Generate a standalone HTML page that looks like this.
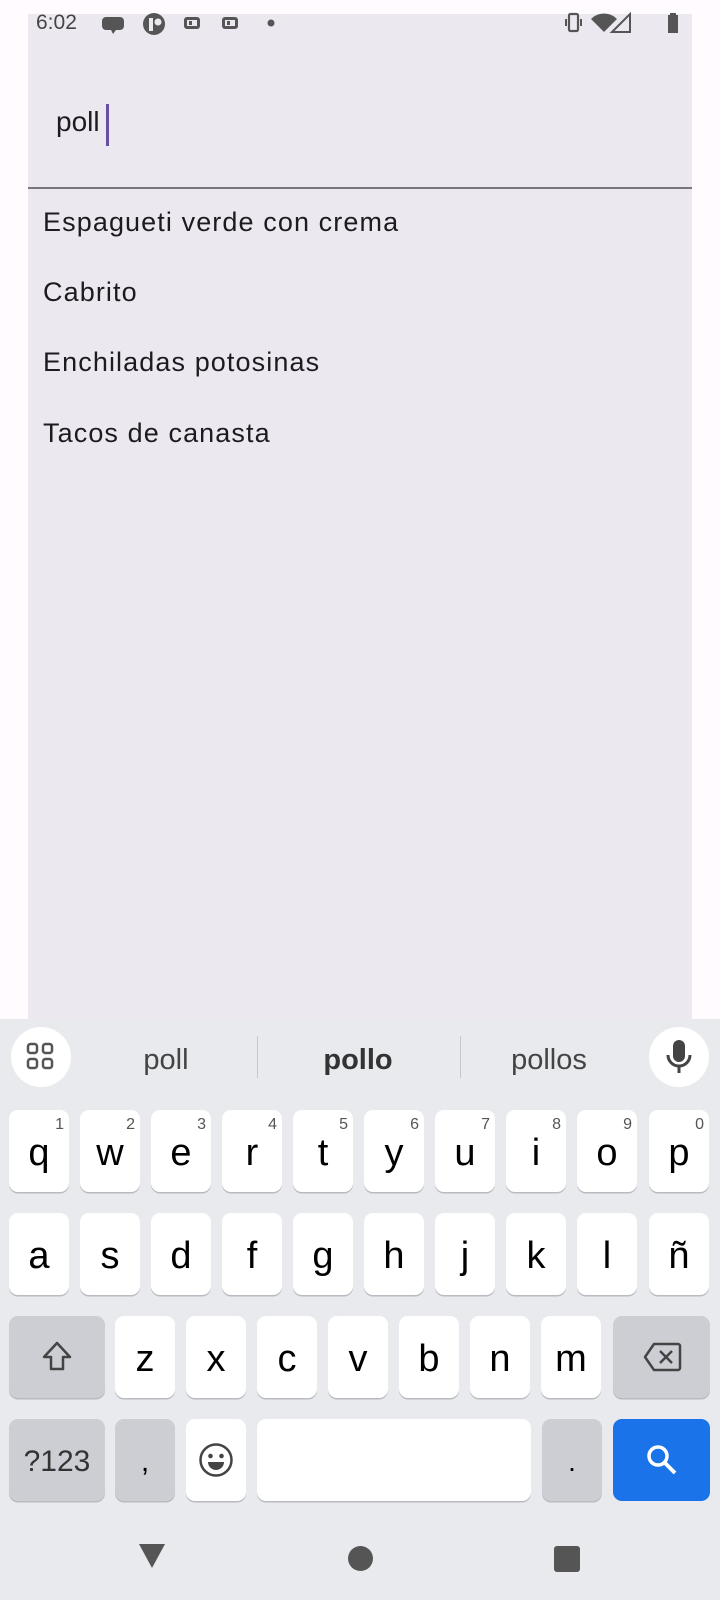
<!DOCTYPE html>
<html><head><meta charset="utf-8"><style>
*{margin:0;padding:0;box-sizing:border-box}
body{width:720px;height:1600px;background:#fffbfe;position:relative;overflow:hidden;font-family:"Liberation Sans",sans-serif}
.abs{position:absolute}
.panel{left:28px;top:14px;width:664px;height:1006px;background:#ece8f0}
.item{left:43px;font-size:27px;color:#1d1b20;letter-spacing:1.1px}
.kb{left:0;top:1019px;width:720px;height:581px;background:#e8eaed}
.key{position:absolute;width:60px;height:82px;background:#fff;border-radius:9px;box-shadow:0 1.5px 0 #b8bbc0;font-size:38px;color:#000;text-align:center;line-height:86px}
.key.g{background:#ccced4}
.key sup{position:absolute;right:5px;top:-28px;font-size:16px;color:#555}
.sug{top:1044px;font-size:29px;color:#444;width:140px;text-align:center}
</style></head><body>
<div class="abs panel"></div>
<div class="abs" style="left:36px;top:11px;font-size:21px;color:#444">6:02</div>
<svg class="abs" style="left:100px;top:12px" width="180" height="26">
<path d="M6 5h14a4 4 0 0 1 4 4v5a4 4 0 0 1-4 4h-4l-3 4-2-4h-5a4 4 0 0 1-4-4v-5a4 4 0 0 1 4-4z" fill="#555"/>
<circle cx="54" cy="12" r="11" fill="#555"/><rect x="49" y="6" width="4" height="13" fill="#ece8f0"/><circle cx="58" cy="10" r="3.5" fill="#ece8f0"/>
<rect x="84" y="5" width="16" height="12" rx="3" fill="#555"/><rect x="87" y="8" width="10" height="6" fill="#ece8f0"/><rect x="89" y="9" width="3" height="4" fill="#555"/>
<rect x="122" y="5" width="16" height="12" rx="3" fill="#555"/><rect x="125" y="8" width="10" height="6" fill="#ece8f0"/><rect x="127" y="9" width="3" height="4" fill="#555"/>
<circle cx="171" cy="11" r="3.5" fill="#555"/></svg>
<svg class="abs" style="left:565px;top:11px" width="120" height="24">
<rect x="4" y="3" width="9" height="17" rx="1.5" fill="none" stroke="#555" stroke-width="2.2"/><path d="M1 8v7M16 8v7" stroke="#555" stroke-width="2"/>
<path d="M39 21L26 8a18 18 0 0 1 26 0z" fill="#555"/>
<path d="M65 3v18h-18z" fill="none" stroke="#555" stroke-width="2"/>
<rect x="103" y="4" width="10" height="18" fill="#555"/><rect x="105" y="2" width="6" height="3" fill="#555"/></svg>
<div class="abs" style="left:56px;top:106px;font-size:28px;color:#1d1b20">poll</div>
<div class="abs" style="left:106px;top:104px;width:3px;height:42px;background:#6750a4"></div>
<div class="abs" style="left:28px;top:187px;width:664px;height:2px;background:#79747e"></div>
<div class="abs item" style="top:207px">Espagueti verde con crema</div>
<div class="abs item" style="top:277px">Cabrito</div>
<div class="abs item" style="top:347px">Enchiladas potosinas</div>
<div class="abs item" style="top:418px">Tacos de canasta</div>
<div class="abs kb"></div>
<div class="abs" style="left:11px;top:1027px;width:60px;height:60px;border-radius:50%;background:#fff"></div>
<svg class="abs" style="left:26px;top:1042px" width="30" height="30"><g fill="none" stroke="#555" stroke-width="2.5"><rect x="2" y="2" width="9" height="9" rx="2.5"/><rect x="17" y="2" width="9" height="9" rx="2.5"/><rect x="2" y="17" width="9" height="9" rx="2.5"/><rect x="17" y="17" width="9" height="9" rx="2.5"/></g></svg>
<div class="abs sug" style="left:96px">poll</div>
<div class="abs sug" style="left:288px;font-weight:bold;color:#333">pollo</div>
<div class="abs sug" style="left:479px">pollos</div>
<div class="abs" style="left:257px;top:1036px;width:1px;height:42px;background:#c8c8cc"></div>
<div class="abs" style="left:460px;top:1036px;width:1px;height:42px;background:#c8c8cc"></div>
<div class="abs" style="left:649px;top:1027px;width:60px;height:60px;border-radius:50%;background:#fff"></div>
<svg class="abs" style="left:664px;top:1040px" width="30" height="36"><rect x="9" y="0" width="12" height="22" rx="6" fill="#444"/><path d="M4 15a11 11 0 0 0 22 0" fill="none" stroke="#444" stroke-width="3"/><rect x="13.5" y="25" width="3" height="8" fill="#444"/></svg>

<div style="position:absolute;left:0;top:1110px">
<div class="key" style="left:9px">q<sup>1</sup></div>
<div class="key" style="left:80px">w<sup>2</sup></div>
<div class="key" style="left:151px">e<sup>3</sup></div>
<div class="key" style="left:222px">r<sup>4</sup></div>
<div class="key" style="left:293px">t<sup>5</sup></div>
<div class="key" style="left:364px">y<sup>6</sup></div>
<div class="key" style="left:435px">u<sup>7</sup></div>
<div class="key" style="left:506px">i<sup>8</sup></div>
<div class="key" style="left:577px">o<sup>9</sup></div>
<div class="key" style="left:649px">p<sup>0</sup></div>
</div>
<div style="position:absolute;left:0;top:1213px">
<div class="key" style="left:9px">a</div>
<div class="key" style="left:80px">s</div>
<div class="key" style="left:151px">d</div>
<div class="key" style="left:222px">f</div>
<div class="key" style="left:293px">g</div>
<div class="key" style="left:364px">h</div>
<div class="key" style="left:435px">j</div>
<div class="key" style="left:506px">k</div>
<div class="key" style="left:577px">l</div>
<div class="key" style="left:649px">ñ</div>
</div>
<div style="position:absolute;left:0;top:1316px">
<div class="key g" style="left:9px;width:96px"><svg width="34" height="34" style="margin-top:24px"><path d="M17 3L4 17h7v12h12V17h7z" fill="none" stroke="#444" stroke-width="2.5" stroke-linejoin="round"/></svg></div>
<div class="key" style="left:115px">z</div>
<div class="key" style="left:186px">x</div>
<div class="key" style="left:257px">c</div>
<div class="key" style="left:328px">v</div>
<div class="key" style="left:399px">b</div>
<div class="key" style="left:470px">n</div>
<div class="key" style="left:541px">m</div>
<div class="key g" style="left:613px;width:97px"><svg width="40" height="32" style="margin-top:25px"><path d="M12 3h24a2 2 0 0 1 2 2v22a2 2 0 0 1-2 2H12L3 16z" fill="none" stroke="#444" stroke-width="2.5" stroke-linejoin="round"/><path d="M18 10l12 12M30 10L18 22" stroke="#444" stroke-width="2.5"/></svg></div>
</div>
<div style="position:absolute;left:0;top:1419px">
<div class="key g" style="left:9px;width:96px;font-size:30px;color:#333">?123</div>
<div class="key g" style="left:115px;font-size:30px">,</div>
<div class="key" style="left:186px"><svg width="36" height="36" style="margin-top:23px"><circle cx="18" cy="18" r="15.5" fill="none" stroke="#444" stroke-width="2.5"/><circle cx="12.5" cy="14" r="2.3" fill="#444"/><circle cx="23.5" cy="14" r="2.3" fill="#444"/><path d="M10 20h16a8 8 0 0 1-16 0z" fill="#444"/></svg></div>
<div class="key" style="left:257px;width:274px"></div>
<div class="key g" style="left:542px;font-size:28px">.</div>
<div class="key" style="left:613px;width:97px;background:#1a73e8;box-shadow:none"><svg width="34" height="34" style="margin-top:24px"><circle cx="13" cy="13" r="9" fill="none" stroke="#fff" stroke-width="3.5"/><path d="M20 20l10 10" stroke="#fff" stroke-width="3.8"/></svg></div>
</div>
<svg class="abs" style="left:138px;top:1542px" width="30" height="28"><path d="M1 2h26L14 26z" fill="#555"/></svg>
<div class="abs" style="left:348px;top:1546px;width:25px;height:25px;border-radius:50%;background:#555"></div>
<div class="abs" style="left:554px;top:1546px;width:26px;height:26px;border-radius:3px;background:#555"></div>
</body></html>
